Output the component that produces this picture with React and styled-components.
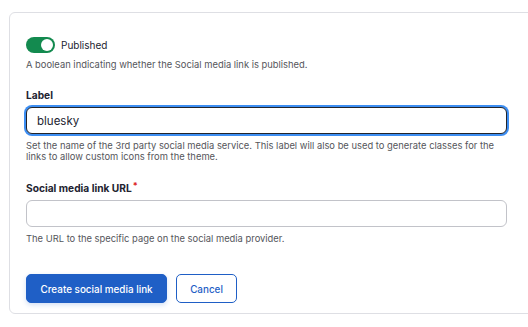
import React, { useState } from "react";
import styled, { createGlobalStyle } from "styled-components";

const GlobalStyle = createGlobalStyle`
  html, body {
    margin: 0;
    padding: 0;
    background: #ffffff;
    overflow: hidden;
  }
  body {
    font-family: Inter, "Liberation Sans", Arial, sans-serif;
    color: #222330;
  }
`;

const Page = styled.div`
  padding: 12px 0 0 9px;
`;

const Card = styled.form`
  width: 540px;
  box-sizing: border-box;
  border: 1px solid #dedfe4;
  border-radius: 6px;
  padding: 23px 16px 10px 16px;
  display: flex;
  flex-direction: column;
`;

const ToggleRow = styled.label`
  display: flex;
  align-items: center;
  gap: 6px;
  height: 16px;
  font-size: 10px;
  padding-top: 1px;
  color: #222330;
`;

const Toggle = styled.span`
  position: relative;
  width: 29px;
  height: 16px;
  margin-top: -1px;
  border-radius: 8px;
  background: ${(p) => (p.$on ? "#138a4f" : "#8e929c")};
  flex-shrink: 0;
  &:after {
    content: "";
    position: absolute;
    top: 2px;
    left: ${(p) => (p.$on ? "15px" : "2px")};
    width: 12px;
    height: 12px;
    border-radius: 50%;
    background: #ffffff;
  }
`;

const Help = styled.div`
  font-size: 9.4px;
  line-height: 11px;
  color: #55565b;
  margin-top: ${(p) => p.$top || 6}px;
  width: 486px;
`;

const FieldLabel = styled.div`
  font-size: 10.2px;
  line-height: 13px;
  font-weight: 700;
  color: #222330;
  margin-top: ${(p) => p.$top}px;
`;

const Required = styled.span`
  color: #dc2323;
  font-size: 9px;
  margin-left: 1px;
  position: relative;
  top: -3px;
`;

const TextInput = styled.input`
  box-sizing: border-box;
  width: 481px;
  height: 27px;
  margin-top: 5px;
  padding: 0 10px;
  font-family: inherit;
  font-size: 11.5px;
  color: #222330;
  border-radius: 6px;
  outline: none;
  background: #ffffff;
  border: ${(p) => (p.$focused ? "1.5px solid #232429" : "1px solid #c2c3c9")};
  box-shadow: ${(p) => (p.$focused ? "0 0 0 2px #3d8ef2" : "none")};
  caret-color: #222330;
`;

const Actions = styled.div`
  display: flex;
  gap: 9px;
  margin-top: 30px;
`;

const Button = styled.button`
  height: 29px;
  box-sizing: border-box;
  padding: 0 ${(p) => (p.$primary ? 13.5 : 13)}px;
  border-radius: 5px;
  font-family: inherit;
  font-size: 9.9px;
  font-weight: 500;
  cursor: pointer;
  border: 1.5px solid #1f5fc6;
  background: ${(p) => (p.$primary ? "#1f5fc6" : "#ffffff")};
  color: ${(p) => (p.$primary ? "#ffffff" : "#1f5fc6")};
  box-shadow: ${(p) => (p.$primary ? "0 2px 5px rgba(31, 95, 198, 0.2)" : "none")};
`;

const App = () => {
  const [published, setPublished] = useState(true);
  const [label, setLabel] = useState("bluesky");
  const [url, setUrl] = useState("");

  return (
    <Page>
      <GlobalStyle />
      <Card onSubmit={(e) => e.preventDefault()}>
        <ToggleRow onClick={() => setPublished(!published)}>
          <Toggle $on={published} />
          Published
        </ToggleRow>
        <Help $top={6}>A boolean indicating whether the Social media link is published.</Help>

        <FieldLabel $top={19}>Label</FieldLabel>
        <TextInput
          $focused
          autoFocus
          value={label}
          onChange={(e) => setLabel(e.target.value)}
        />
        <Help $top={6}>
          Set the name of the 3rd party social media service. This label will also be used to generate classes for the
          links to allow custom icons from the theme.
        </Help>

        <FieldLabel $top={20}>
          Social media link URL<Required>*</Required>
        </FieldLabel>
        <TextInput value={url} onChange={(e) => setUrl(e.target.value)} />
        <Help $top={6}>The URL to the specific page on the social media provider.</Help>

        <Actions>
          <Button $primary type="submit">Create social media link</Button>
          <Button type="button">Cancel</Button>
        </Actions>
      </Card>
    </Page>
  );
};

export default App;
